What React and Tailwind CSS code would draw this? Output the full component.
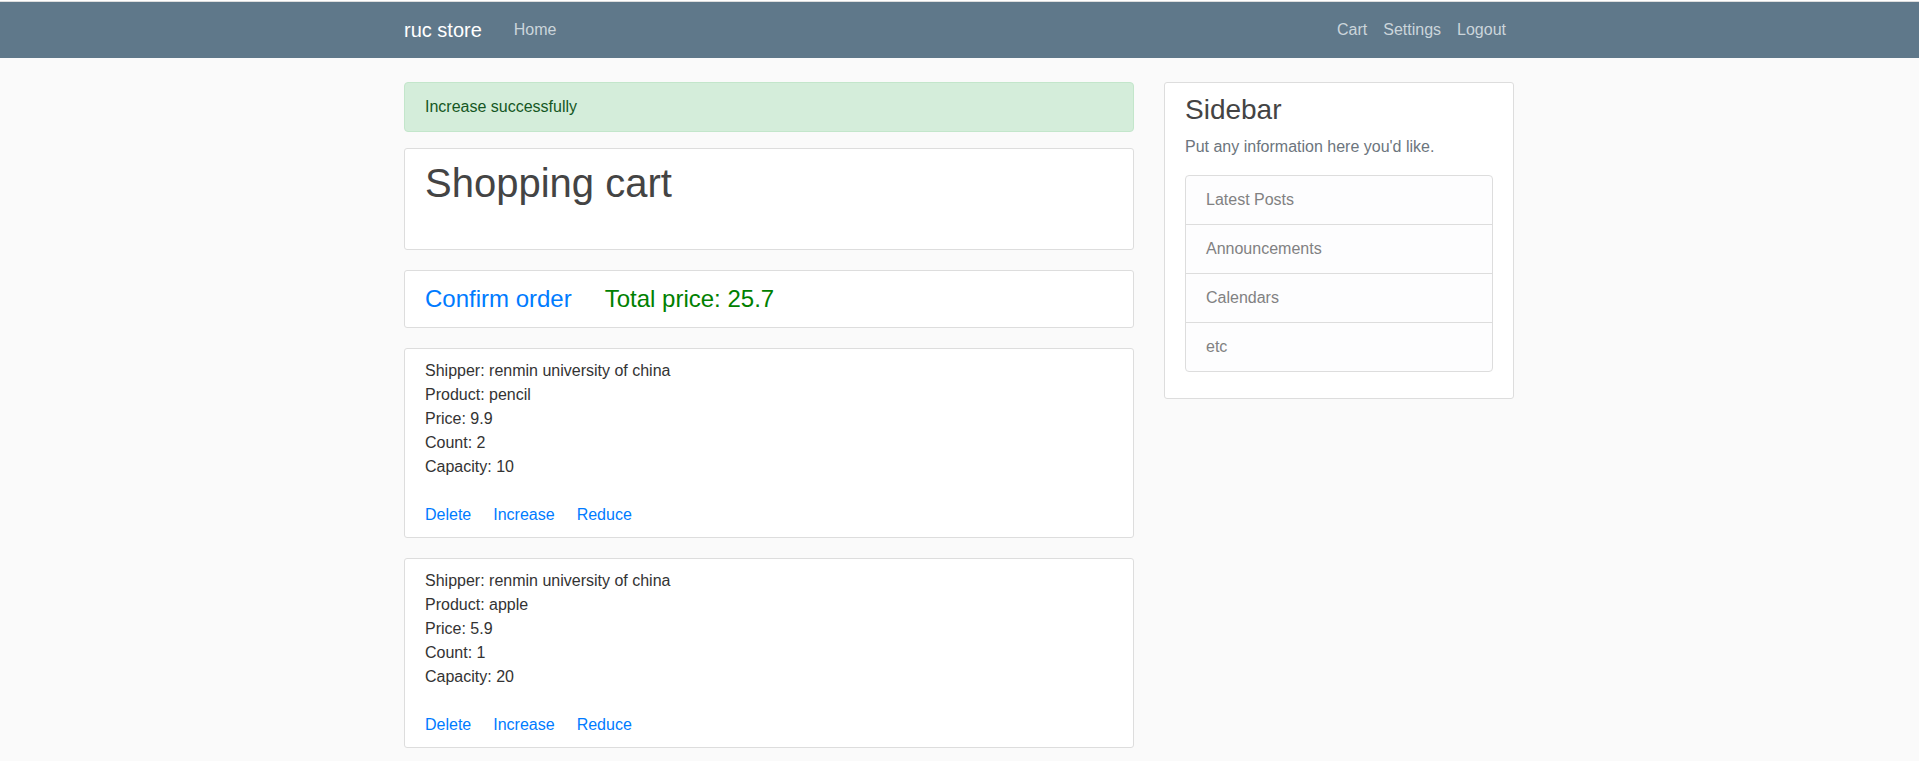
const items = [
  { shipper: 'renmin university of china', product: 'pencil', price: '9.9', count: 2, capacity: 10 },
  { shipper: 'renmin university of china', product: 'apple', price: '5.9', count: 1, capacity: 20 },
];

const sidebarLinks = ['Latest Posts', 'Announcements', 'Calendars', 'etc'];

function NavLink({ children }) {
  return (
    <a href="#" className="block py-2 px-2 text-[#cbd5db] hover:text-white">
      {children}
    </a>
  );
}

function Section({ as: Tag = 'section', children }) {
  return (
    <Tag className="rounded-[3px] border border-[#dddddd] bg-white px-5 py-[10px]">{children}</Tag>
  );
}

function ActionLink({ children }) {
  return (
    <a href="#" className="text-[#007bff] hover:underline">
      {children}
    </a>
  );
}

function Header() {
  return (
    <header className="border-t border-white">
      <div className="border-t border-[#dddddd] bg-[#5f788a]">
        <nav className="mx-auto flex max-w-[1141px] items-center py-2 pr-4 pl-[15px]">
          <a href="#" className="mr-6 text-xl leading-[30px] text-white">
            ruc store
          </a>
          <div className="flex grow justify-between">
            <NavLink>Home</NavLink>
            <div className="flex">
              <NavLink>Cart</NavLink>
              <NavLink>Settings</NavLink>
              <NavLink>Logout</NavLink>
            </div>
          </div>
        </nav>
      </div>
    </header>
  );
}

function CartItem({ item }) {
  return (
    <Section as="article">
      <p>Shipper: {item.shipper}</p>
      <p>Product: {item.product}</p>
      <p>Price: {item.price}</p>
      <p>Count: {item.count}</p>
      <p>Capacity: {item.capacity}</p>
      <div className="mt-6 flex gap-[22px]">
        <ActionLink>Delete</ActionLink>
        <ActionLink>Increase</ActionLink>
        <ActionLink>Reduce</ActionLink>
      </div>
    </Section>
  );
}

function Sidebar() {
  return (
    <Section as="aside">
      <h3 className="mb-2 text-[28px] leading-[34px] text-[#444444]">Sidebar</h3>
      <p className="mb-4 text-[#6c757d]">Put any information here you'd like.</p>
      <ul className="mb-4 divide-y divide-[#dddddd] overflow-hidden rounded border border-[#dddddd] bg-[#fdfdfe]">
        {sidebarLinks.map((label) => (
          <li key={label} className="px-5 py-3 text-[#818182]">
            {label}
          </li>
        ))}
      </ul>
    </Section>
  );
}

export default function App() {
  return (
    <div className="min-h-screen bg-[#fafafa] font-['Liberation_Sans',Arial,sans-serif] text-base text-[#333333]">
      <Header />
      <main className="mx-auto grid max-w-[1141px] grid-cols-1 items-start gap-[30px] pt-6 pr-4 pl-[15px] md:grid-cols-3">
        <div className="md:col-span-2">
          <div
            role="status"
            className="mb-4 rounded border border-[#c3e6cb] bg-[#d4edda] px-5 py-3 text-[#155724]"
          >
            Increase successfully
          </div>
          <div className="flex flex-col gap-5">
            <Section as="header">
              <h1 className="mb-8 text-[40px] leading-12 text-[#444444]">Shopping cart</h1>
            </Section>
            <Section>
              <div className="flex gap-[33px] text-2xl leading-9">
                <ActionLink>Confirm order</ActionLink>
                <span className="text-[#008000]">Total price: 25.7</span>
              </div>
            </Section>
            {items.map((item) => (
              <CartItem key={item.product} item={item} />
            ))}
          </div>
        </div>
        <Sidebar />
      </main>
    </div>
  );
}
